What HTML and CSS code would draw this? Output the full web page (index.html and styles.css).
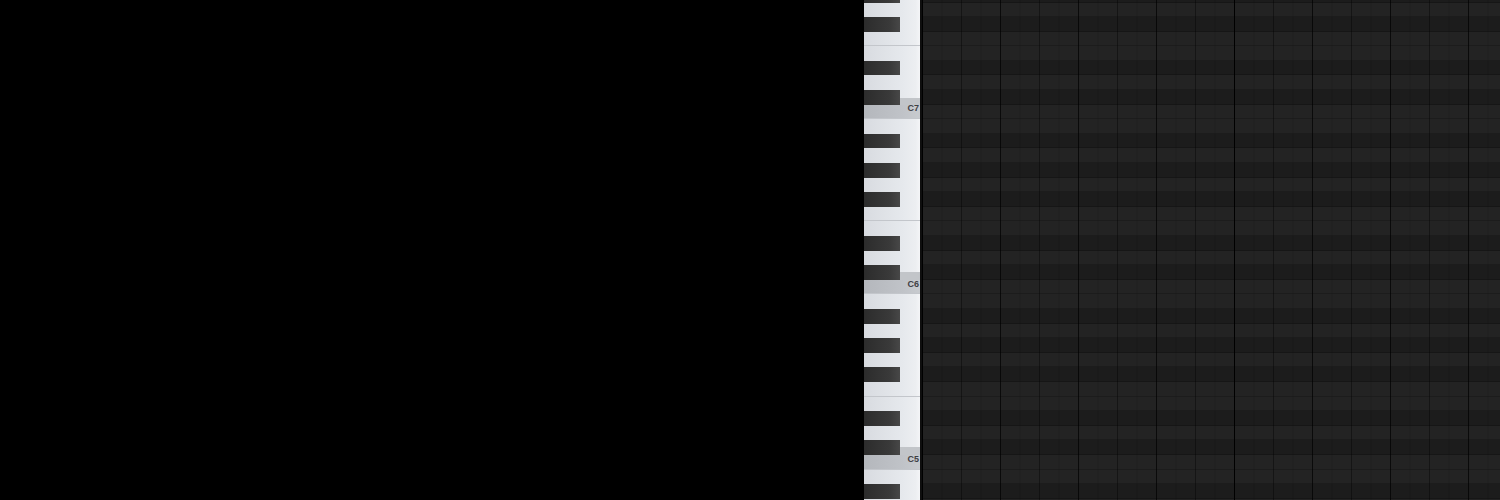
FILE: index.html
```html
<!DOCTYPE html>
<html>
<head>
<meta charset="utf-8">
<title>Piano Roll</title>
<link rel="stylesheet" href="styles.css">
</head>
<body>
<div class="app">
  <div class="void"></div>
  <div class="keys">
    <div class="col">
      <div class="k b"><span class="bk"></span></div>
      <div class="k w"></div>
      <div class="k b"><span class="bk"></span></div>
      <div class="k w f"></div>
      <div class="k w"></div>
      <div class="k b"><span class="bk"></span></div>
      <div class="k w"></div>
      <div class="k b cs"><span class="bk"></span></div>
      <div class="k w c"><span class="lbl">C7</span></div>
      <div class="k w"></div>
      <div class="k b"><span class="bk"></span></div>
      <div class="k w"></div>
      <div class="k b"><span class="bk"></span></div>
      <div class="k w"></div>
      <div class="k b"><span class="bk"></span></div>
      <div class="k w f"></div>
      <div class="k w"></div>
      <div class="k b"><span class="bk"></span></div>
      <div class="k w"></div>
      <div class="k b cs"><span class="bk"></span></div>
      <div class="k w c"><span class="lbl">C6</span></div>
      <div class="k w"></div>
      <div class="k b"><span class="bk"></span></div>
      <div class="k w"></div>
      <div class="k b"><span class="bk"></span></div>
      <div class="k w"></div>
      <div class="k b"><span class="bk"></span></div>
      <div class="k w f"></div>
      <div class="k w"></div>
      <div class="k b"><span class="bk"></span></div>
      <div class="k w"></div>
      <div class="k b cs"><span class="bk"></span></div>
      <div class="k w c"><span class="lbl">C5</span></div>
      <div class="k w"></div>
      <div class="k b"><span class="bk"></span></div>
      <div class="k w"></div>
    </div>
  </div>
  <div class="divider"></div>
  <div class="roll">
    <div class="col">
      <div class="g b"></div>
      <div class="g w"></div>
      <div class="g b"></div>
      <div class="g w"></div>
      <div class="g w"></div>
      <div class="g b"></div>
      <div class="g w"></div>
      <div class="g b"></div>
      <div class="g w"></div>
      <div class="g w"></div>
      <div class="g b"></div>
      <div class="g w"></div>
      <div class="g b"></div>
      <div class="g w"></div>
      <div class="g b"></div>
      <div class="g w"></div>
      <div class="g w"></div>
      <div class="g b"></div>
      <div class="g w"></div>
      <div class="g b"></div>
      <div class="g w"></div>
      <div class="g w"></div>
      <div class="g b"></div>
      <div class="g w"></div>
      <div class="g b"></div>
      <div class="g w"></div>
      <div class="g b"></div>
      <div class="g w"></div>
      <div class="g w"></div>
      <div class="g b"></div>
      <div class="g w"></div>
      <div class="g b"></div>
      <div class="g w"></div>
      <div class="g w"></div>
      <div class="g b"></div>
      <div class="g w"></div>
    </div>
  </div>
</div>
</body>
</html>
```
FILE: styles.css
```css
html, body {
  margin: 0;
  padding: 0;
  background: #000;
  height: 500px;
  overflow: hidden;
}

.app {
  display: flex;
  height: 500px;
  overflow: hidden;
}

.void {
  flex: 0 0 864px;
  background: #000;
}

.keys {
  flex: 0 0 56px;
  overflow: hidden;
  background: #e3e6ea;
}

.divider {
  flex: 0 0 2px;
  background: #0e0e0e;
}

.roll {
  flex: 1;
  overflow: hidden;
}

.col {
  display: flex;
  flex-direction: column;
  margin-top: -12.1px;
}

/* keyboard rows */
.k {
  flex: none;
  height: 14.6px;
  box-sizing: border-box;
  position: relative;
  display: flex;
  background: linear-gradient(to right, #d8dbe0 0%, #e6e9ed 70%, #eceef1 92%, #f4f5f7 100%);
}

.k.f,
.k.c {
  border-bottom: 1px solid #c3c6cb;
}

.k.c {
  background: linear-gradient(to right, #b4b7bc 0%, #c0c3c8 70%, #c8cbcf 100%);
  justify-content: flex-end;
  align-items: center;
  padding-bottom: 5px;
}

.k.cs {
  background:
    linear-gradient(to bottom, transparent 50%, #c2c5c9 50%),
    linear-gradient(to right, #d8dbe0 0%, #e6e9ed 70%, #eceef1 92%, #f4f5f7 100%);
}

.bk {
  display: block;
  width: 36px;
  height: 100%;
  background: linear-gradient(to right, #2c2c2c 0%, #393939 70%, #474747 100%);
}

.lbl {
  font-family: "Liberation Sans", Arial, sans-serif;
  font-size: 9px;
  font-weight: bold;
  line-height: 9px;
  color: #3e4044;
  padding-right: 1px;
}

/* grid rows */
.g {
  flex: none;
  height: 14.6px;
  box-shadow: inset 0 -1px 0 rgba(0, 0, 0, 0.18);
  background-image:
    linear-gradient(to right, #000 0 1px, transparent 1px),
    linear-gradient(to right, rgba(0, 0, 0, 0.5) 0 1px, transparent 1px),
    linear-gradient(to right, rgba(0, 0, 0, 0.32) 0 1px, transparent 1px),
    linear-gradient(to right, rgba(0, 0, 0, 0.12) 0 1px, transparent 1px);
  background-size: 312px 100%, 78px 100%, 39px 100%, 19.5px 100%;
  background-repeat: repeat-x;
}

.g.w {
  background-color: #232323;
}

.g.b {
  background-color: #1c1c1c;
}
```
